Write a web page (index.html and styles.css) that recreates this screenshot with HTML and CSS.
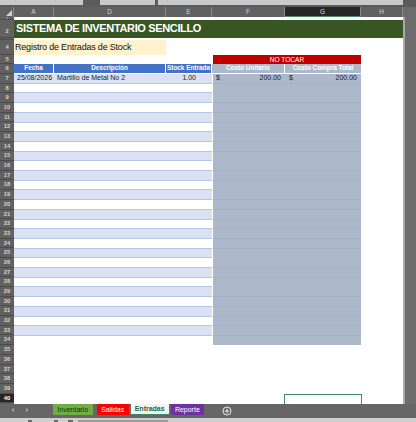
FILE: index.html
```html
<!DOCTYPE html>
<html lang="es">
<head>
<meta charset="utf-8">
<title>Entradas</title>
<link rel="stylesheet" href="styles.css">
</head>
<body>
<div class="app">
  <div class="topbar">
    <span class="box b1"></span><span class="box b2"></span><span class="box b3"></span>
  </div>
  <div class="colheads">
    <div class="ch corner"><svg width="6" height="6" viewBox="0 0 6 6"><polygon points="6,0 6,6 0,6" fill="#d0d0d0"/></svg></div>
    <div class="ch w-a">A</div>
    <div class="ch w-d">D</div>
    <div class="ch w-e">E</div>
    <div class="ch w-f">F</div>
    <div class="ch w-g sel">G</div>
    <div class="ch w-h">H</div>
    <div class="ch w-s"></div>
  </div>
  <div class="main">
    <div class="rowheads">
      <div class="rh h1">1</div>
      <div class="rh h2">2</div>
      <div class="rh h3"></div>
      <div class="rh h4">4</div>
      <div class="rh">5</div><div class="rh">6</div><div class="rh">7</div><div class="rh">8</div>
      <div class="rh">9</div><div class="rh">10</div><div class="rh">11</div><div class="rh">12</div>
      <div class="rh">13</div><div class="rh">14</div><div class="rh">15</div><div class="rh">16</div>
      <div class="rh">17</div><div class="rh">18</div><div class="rh">19</div><div class="rh">20</div>
      <div class="rh">21</div><div class="rh">22</div><div class="rh">23</div><div class="rh">24</div>
      <div class="rh">25</div><div class="rh">26</div><div class="rh">27</div><div class="rh">28</div>
      <div class="rh">29</div><div class="rh">30</div><div class="rh">31</div><div class="rh">32</div>
      <div class="rh">33</div><div class="rh">34</div><div class="rh">35</div><div class="rh">36</div>
      <div class="rh">37</div><div class="rh">38</div><div class="rh">39</div><div class="rh sel">40</div>
    </div>
    <div class="sheet">
      <div class="row-1"></div>
      <div class="title">SISTEMA DE INVENTARIO SENCILLO</div>
      <div class="row-3"></div>
      <div class="row-4"><div class="peach">Registro de Entradas de Stock</div></div>
      <div class="row-5"><div class="notocar">NO TOCAR</div></div>
      <div class="row-6">
        <div class="hd">Fecha</div>
        <div class="hd">Descripción</div>
        <div class="hd">Stock Entrada</div>
        <div class="hd2">Costo Unitario</div>
        <div class="hd2">Costo Compra Total</div>
      </div>
      <div class="body">
        <div class="stripes">
          <div class="drow">
            <div class="cell">25/08/2026</div>
            <div class="cell">Martillo de Metal No 2</div>
            <div class="cell num">1.00</div>
          </div>
        </div>
        <div class="slate">
          <div class="drow2">
            <div class="cell money m1"><span>$</span><span>200.00</span></div>
            <div class="cell money m2"><span>$</span><span>200.00</span></div>
          </div>
        </div>
      </div>
      <div class="blank">
        <div class="spacer"></div>
        <div class="row-40"><div class="selcell"></div></div>
      </div>
    </div>
    <div class="vscroll"></div>
  </div>
  <div class="tabs">
    <div class="nav">
      <svg width="30" height="8" viewBox="0 0 30 8"><polygon points="14,2 14,6 11.5,4" fill="#a8a8a8"/><polygon points="27,2 27,6 29.5,4" fill="#a8a8a8" transform="translate(-1,0)"/></svg>
    </div>
    <div class="tab t-inv">Inventario</div>
    <div class="tab t-sal">Salidas</div>
    <div class="tab t-ent">Entradas</div>
    <div class="tab t-rep">Reporte</div>
    <div class="plus">
      <svg width="10" height="10" viewBox="0 0 10 10"><circle cx="5" cy="5" r="4" fill="none" stroke="#e8e8e8" stroke-width="1"/><path d="M5 2.8V7.2M2.8 5H7.2" stroke="#e8e8e8" stroke-width="1"/></svg>
    </div>
  </div>
  <div class="status">
    <span class="sp s1"></span><span class="sp s2"></span><span class="sp s3"></span><span class="sp s4"></span>
  </div>
</div>
</body>
</html>
```
FILE: styles.css
```css
* { box-sizing: border-box; }
html, body { margin: 0; padding: 0; }
body {
  width: 416px;
  height: 422px;
  overflow: hidden;
  background: #ffffff;
  font-family: "Liberation Sans", Arial, sans-serif;
}
.app { width: 416px; height: 422px; display: flex; flex-direction: column; }

.topbar {
  height: 7px;
  background: #5b5b5b;
  display: flex;
  align-items: flex-start;
}
.box { height: 5px; background: #c9c9c9; display: block; }
.b1 { width: 83px; }
.b2 { width: 55px; margin-left: 17px; }
.b3 { width: 245px; margin-left: 3px; }

.colheads {
  height: 10px;
  display: flex;
  background: #616161;
}
.ch {
  height: 10px;
  color: #d6d6d6;
  font-size: 6.4px;
  line-height: 10px;
  text-align: center;
  border-right: 1px solid #8a8a8a;
  flex: none;
}
.corner { width: 14px; display: flex; align-items: flex-end; justify-content: flex-end; padding: 0 1px 1px 0; }
.w-a { width: 40px; }
.w-d { width: 112px; }
.w-e { width: 46px; }
.w-f { width: 73px; }
.w-g { width: 76px; }
.w-h { width: 42px; }
.w-s { width: 13px; border-right: none; background: #6c6c6c; }
.ch.sel { background: #262626; color: #e0e0e0; border-bottom: 1px solid #4e8c6a; }

.main { display: flex; height: 386.7px; }

.rowheads { width: 14px; flex: none; display: flex; flex-direction: column; background: #616161; }
.rh {
  height: 9.7px;
  flex: none;
  color: #d4d4d4;
  font-size: 5.8px;
  font-weight: bold;
  line-height: 9.7px;
  text-align: center;
  border-bottom: 1px solid #4b4b4b;
  overflow: hidden;
}
.rh.h1 { height: 3px; line-height: 3px; font-size: 3px; }
.rh.h2 { height: 17.5px; line-height: 22px; }
.rh.h3 { height: 2px; }
.rh.h4 { height: 15px; line-height: 15px; }
.rh.sel { background: #262626; color: #ffffff; }

.sheet { width: 389px; flex: none; display: flex; flex-direction: column; background: #ffffff; }
.row-1 { height: 3px; }
.title {
  height: 17.5px;
  background: #375623;
  color: #ffffff;
  font-weight: bold;
  font-size: 11px;
  letter-spacing: -0.35px;
  line-height: 17.5px;
  padding-left: 2px;
  white-space: nowrap;
}
.row-3 { height: 2px; }
.row-4 { height: 15px; display: flex; }
.peach {
  width: 152px;
  background: #fff2cc;
  color: #111;
  font-size: 9px;
  letter-spacing: -0.2px;
  line-height: 15px;
  padding-left: 1px;
  white-space: nowrap;
}
.row-5 { height: 9.7px; display: flex; padding-left: 199px; padding-top: 0.5px; }
.notocar {
  width: 148px;
  background: #c00000;
  color: #ffffff;
  font-size: 6.6px;
  line-height: 9.2px;
  text-align: center;
}
.row-6 {
  height: 9.7px;
  display: grid;
  grid-template-columns: 40px 112px 46px 73px 76px;
  border-bottom: 1px solid #ffffff;
}
.hd, .hd2 {
  color: #ffffff;
  font-weight: bold;
  font-size: 6.4px;
  line-height: 8.7px;
  text-align: center;
  white-space: nowrap;
  overflow: hidden;
  border-right: 1px solid #ffffff;
}
.hd { background: #4472c4; }
.hd2 { background: #acb9ca; }
.hd2:last-child { border-right: none; }

.body {
  height: 271.6px;
  display: grid;
  grid-template-columns: 198px 149px;
}
.stripes {
  background: repeating-linear-gradient(to bottom,
    #d9e1f2 0, #d9e1f2 8.7px, #b4c6e7 8.7px, #b4c6e7 9.7px,
    #ffffff 9.7px, #ffffff 18.4px, #b4c6e7 18.4px, #b4c6e7 19.4px);
}
.slate {
  background: repeating-linear-gradient(to bottom,
    #adb9cb 0, #adb9cb 8.9px, #a2afc4 8.9px, #a2afc4 9.7px);
  border-left: 1px solid #ffffff;
}
.drow { display: grid; grid-template-columns: 40px 112px 46px; height: 9.7px; }
.drow2 { display: grid; grid-template-columns: 72px 76px; height: 9.7px; }
.cell {
  font-size: 7px;
  line-height: 8.7px;
  color: #1a1a1a;
  white-space: nowrap;
  padding-left: 3px;
  overflow: hidden;
}
.cell.num { text-align: right; padding-right: 16px; }
.money { display: flex; justify-content: space-between; padding-left: 3px; }
.m1 { padding-right: 4px; }
.m2 { padding-left: 4px; padding-right: 4px; }

.blank { height: 58.2px; display: flex; flex-direction: column; }
.spacer { height: 48.5px; }
.row-40 { height: 9.7px; display: flex; padding-left: 270px; }
.selcell { width: 78px; height: 10px; border: 1.5px solid #3f8a63; border-bottom: none; }

.vscroll { width: 13px; flex: none; background: #6d6d6d; border-left: 2px solid #a9a9a9; }

.tabs {
  height: 14.3px;
  background: #666666;
  display: flex;
  align-items: flex-start;
}
.nav { width: 52.7px; height: 12px; display: flex; align-items: center; }
.tab {
  height: 11.7px;
  font-size: 7px;
  line-height: 11.7px;
  text-align: center;
  white-space: nowrap;
  flex: none;
}
.t-inv { width: 40px; background: #70ad47; color: #1b2a12; margin-right: 4px; }
.t-sal { width: 32px; background: #ff0000; color: #ffffff; margin-right: 2px; }
.t-ent { width: 38px; background: #f3f3f3; color: #1e6b3f; font-weight: bold; margin-right: 2px; border-bottom: 1.5px solid #3f8a63; line-height: 10.5px; }
.t-rep { width: 33.3px; background: #7030a0; color: #ffffff; }
.plus { margin-left: 18px; height: 12px; display: flex; align-items: center; padding-top: 2px; }

.status { height: 4px; background: #cfcfcf; display: flex; align-items: flex-end; }
.sp { display: block; height: 2px; background: #6a6a6a; }
.s1 { width: 4px; margin-left: 28px; }
.s2 { width: 4px; margin-left: 22px; }
.s3 { width: 5px; margin-left: 10px; }
.s4 { width: 90px; margin-left: 5px; background: #9a9a9a; }
```
